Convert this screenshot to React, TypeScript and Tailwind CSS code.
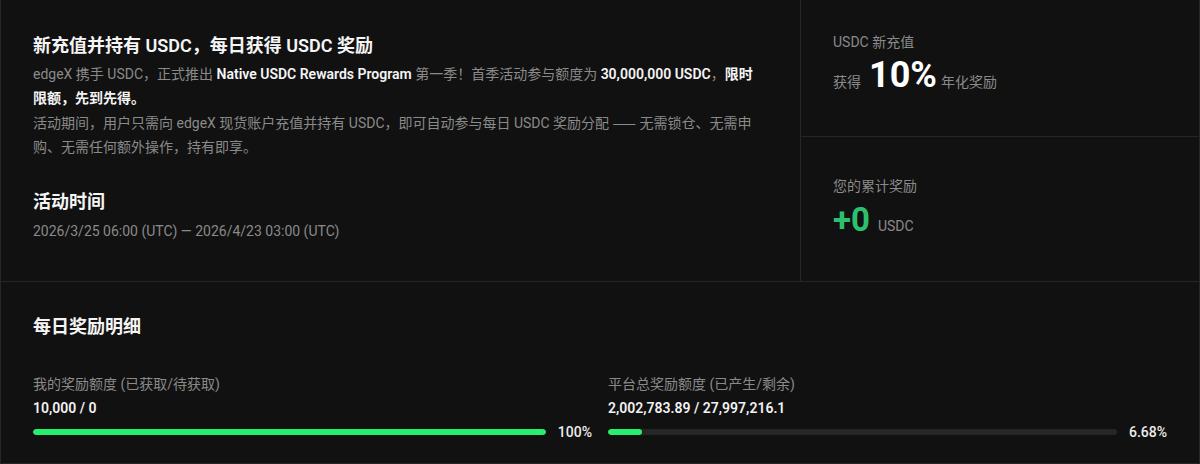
import React from 'react';

const font = { fontFamily: 'Roboto, "Noto Sans CJK SC", sans-serif' };

type BarProps = {
  label: string;
  value: string;
  percent: number;
  percentText: string;
};

const ProgressItem: React.FC<BarProps> = ({ label, value, percent, percentText }) => (
  <div className="flex flex-col">
    <div className="text-sm leading-5 text-[#8a8a8a]">{label}</div>
    <div className="mt-1 text-sm font-semibold leading-5 text-[#f2f2f2]">{value}</div>
    <div className="mt-1 flex h-5 items-center gap-3">
      <div className="h-1.5 flex-1 overflow-hidden rounded-full bg-[#262626]">
        <div className="h-full rounded-full bg-[#27ee6c]" style={{ width: `${percent}%` }} />
      </div>
      <span className="text-sm font-medium leading-5 text-[#ececec]">{percentText}</span>
    </div>
  </div>
);

const App: React.FC = () => {
  return (
    <div className="h-[464px] w-[1200px] bg-[#111111]" style={font}>
      <div className="flex h-[464px] flex-col border border-t-0 border-[#262626]">
        <div className="flex h-[282px] border-b border-[#262626]">
          {/* activity info */}
          <div className="flex-1 border-r border-[#262626] pl-8 pr-10 pt-8">
            <h1 className="text-lg font-semibold leading-7 text-[#f5f5f5]">
              新充值并持有 USDC，每日获得 USDC 奖励
            </h1>
            <p className="mt-0.5 text-sm leading-6 text-[#8a8a8a]">
              edgeX 携手 USDC，正式推出{' '}
              <span className="font-semibold text-[#f5f5f5]">Native USDC Rewards Program</span> 第一季！首季活动参与额度为{' '}
              <span className="font-semibold text-[#f5f5f5]">30,000,000 USDC</span>，
              <span className="font-semibold text-[#f5f5f5]">限时限额，先到先得。</span>
            </p>
            <p className="text-sm leading-6 text-[#8a8a8a]">
              活动期间，用户只需向 edgeX 现货账户充值并持有 USDC，即可自动参与每日 USDC 奖励分配{' '}
              <span className="font-['Noto_Sans_CJK_SC']">——</span> 无需锁仓、无需申购、无需任何额外操作，持有即享。
            </p>
            <h2 className="mt-[29px] text-lg font-semibold leading-7 text-[#f5f5f5]">活动时间</h2>
            <div className="mt-[3px] text-sm leading-6 text-[#8a8a8a]">
              2026/3/25 06:00 (UTC) — 2026/4/23 03:00 (UTC)
            </div>
          </div>

          {/* stats */}
          <div className="flex w-[398px] flex-col">
            <div className="h-[137px] border-b border-[#262626] px-8 pt-8">
              <div className="text-sm leading-5 text-[#8a8a8a]">USDC 新充值</div>
              <div className="mt-[3px] flex items-baseline">
                <span className="text-sm text-[#8a8a8a]">获得</span>
                <span className="ml-2 text-4xl font-bold leading-10 text-white">10%</span>
                <span className="ml-1 text-sm text-[#8a8a8a]">年化奖励</span>
              </div>
            </div>
            <div className="flex-1 px-8 pt-[39px]">
              <div className="text-sm leading-5 text-[#8a8a8a]">您的累计奖励</div>
              <div className="mt-1 flex items-baseline gap-2">
                <span className="text-[33px] font-bold leading-10 text-[#2ebf6e]">+0</span>
                <span className="text-sm text-[#8a8a8a]">USDC</span>
              </div>
            </div>
          </div>
        </div>

        {/* daily rewards */}
        <div className="flex-1 px-8 pt-[31px]">
          <h2 className="text-lg font-semibold leading-7 text-[#f5f5f5]">每日奖励明细</h2>
          <div className="mt-[33px] grid grid-cols-2 gap-4">
            <ProgressItem
              label="我的奖励额度 (已获取/待获取)"
              value="10,000 / 0"
              percent={100}
              percentText="100%"
            />
            <ProgressItem
              label="平台总奖励额度 (已产生/剩余)"
              value="2,002,783.89 / 27,997,216.1"
              percent={6.68}
              percentText="6.68%"
            />
          </div>
        </div>
      </div>
    </div>
  );
};

export default App;
